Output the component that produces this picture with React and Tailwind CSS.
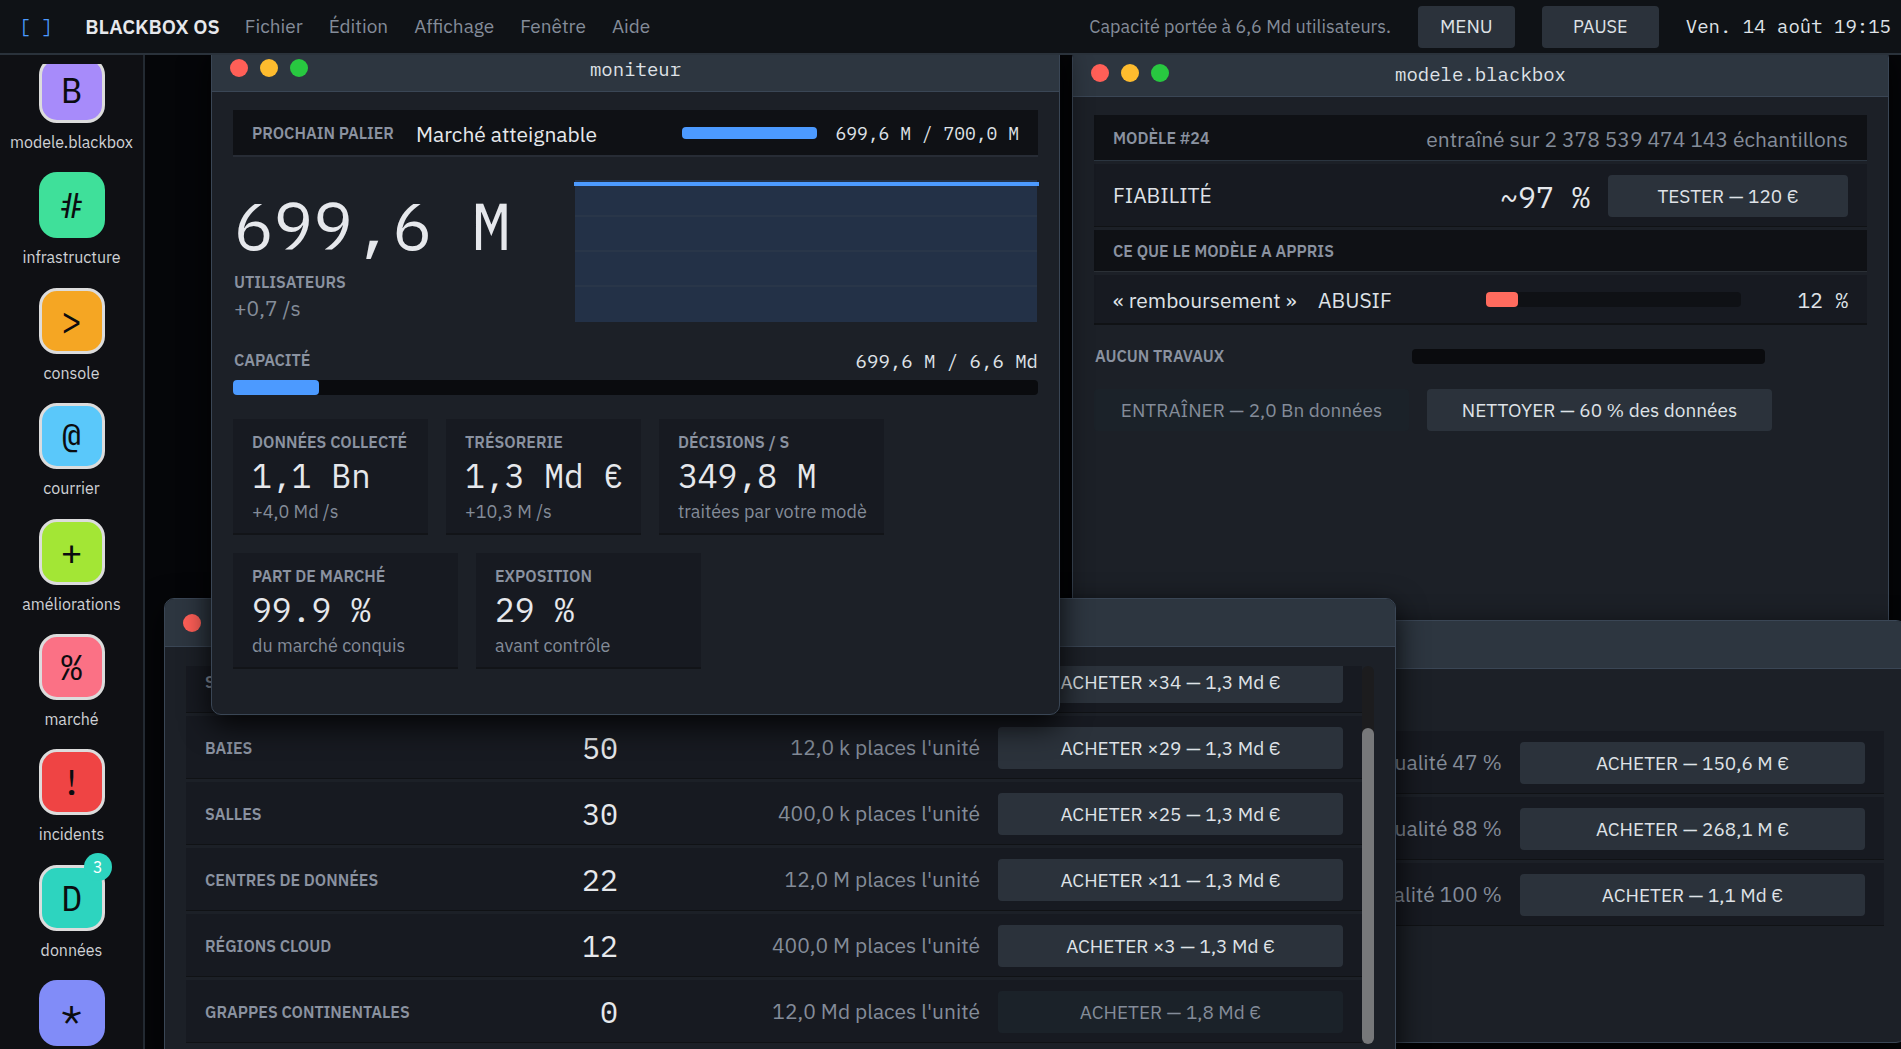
const apps = [
  { glyph: "B", name: "modele.blackbox", color: "bg-[#a78bfa]", open: true },
  { glyph: "#", name: "infrastructure", color: "bg-[#3fe09a]" },
  { glyph: ">", name: "console", color: "bg-[#f5a623]", open: true },
  { glyph: "@", name: "courrier", color: "bg-[#5ac8fa]", open: true },
  { glyph: "+", name: "améliorations", color: "bg-[#a3e635]", open: true },
  { glyph: "%", name: "marché", color: "bg-[#fb7185]", open: true },
  { glyph: "!", name: "incidents", color: "bg-[#ef4444]", open: true },
  { glyph: "D", name: "données", color: "bg-[#2dd4bf]", open: true, badge: 3 },
  { glyph: "*", name: "succès", color: "bg-[#818cf8]" },
];

const tiles = [
  { label: "DONNÉES COLLECTÉ", value: "1,1 Bn", note: "+4,0 Md /s", width: "w-[195px]" },
  { label: "TRÉSORERIE", value: "1,3 Md €", note: "+10,3 M /s", width: "w-[195px]" },
  { label: "DÉCISIONS / S", value: "349,8 M", note: "traitées par votre modè", width: "w-[225px]" },
  { label: "PART DE MARCHÉ", value: "99.9 %", note: "du marché conquis", width: "w-[225px]" },
  { label: "EXPOSITION", value: "29 %", note: "avant contrôle", width: "w-[225px]" },
];

const servers = [
  { name: "SERVEURS", count: 74, note: "400 places l'unité", price: "ACHETER ×34 — 1,3 Md €" },
  { name: "BAIES", count: 50, note: "12,0 k places l'unité", price: "ACHETER ×29 — 1,3 Md €" },
  { name: "SALLES", count: 30, note: "400,0 k places l'unité", price: "ACHETER ×25 — 1,3 Md €" },
  { name: "CENTRES DE DONNÉES", count: 22, note: "12,0 M places l'unité", price: "ACHETER ×11 — 1,3 Md €" },
  { name: "RÉGIONS CLOUD", count: 12, note: "400,0 M places l'unité", price: "ACHETER ×3 — 1,3 Md €" },
  { name: "GRAPPES CONTINENTALES", count: 0, note: "12,0 Md places l'unité", price: "ACHETER — 1,8 Md €", disabled: true },
];

const datasets = [
  { note: "qualité 47 %", price: "ACHETER — 150,6 M €" },
  { note: "qualité 88 %", price: "ACHETER — 268,1 M €" },
  { note: "qualité 100 %", price: "ACHETER — 1,1 Md €" },
];

const mono = "font-['IBM_Plex_Mono','Liberation_Mono',monospace]";
const label = "text-[16px] leading-6 font-semibold text-[#8a92a0]";
const body = "pt-[2px] text-[21px] leading-7";
const rowBox = "flex h-[63px] items-center border-b border-[#101215] bg-[#171a21] px-[19px] pt-[2px]";

function Button({ className = "text-[19px]", width, children, ...rest }) {
  return (
    <button
      type="button"
      className={`h-[42px] shrink-0 rounded-[4px] bg-[#2b323b] text-[#dfe2e7] disabled:bg-[#1b2229] disabled:text-[#848c99] ${width} ${className}`}
      {...rest}
    >
      {children}
    </button>
  );
}

function Window({ title, place, children }) {
  return (
    <section className={`absolute flex flex-col overflow-hidden rounded-[10px] border border-[#3a4655] bg-[#1c2027] shadow-[0_10px_30px_rgba(0,0,0,0.85)] ${place}`}>
      <header className="grid h-12 shrink-0 grid-cols-3 items-center border-b border-[#3a4655] bg-[#2d3640] px-[18px]">
        <div className="flex gap-3">
          <span className="size-[18px] rounded-full bg-[#ff5f57]" />
          <span className="size-[18px] rounded-full bg-[#febc2e]" />
          <span className="size-[18px] rounded-full bg-[#28c840]" />
        </div>
        <h2 className={`pt-[2px] text-center text-[19px] leading-6 text-[#dfe2e7] ${mono}`}>{title}</h2>
      </header>
      <div className="px-[21px] pt-[18px]">{children}</div>
    </section>
  );
}

function MenuBar() {
  return (
    <header className="z-10 flex h-[55px] shrink-0 items-center border-b-2 border-[#2a323b] bg-[#0f1216] pr-[10px] pl-[19px] text-[19px] whitespace-nowrap text-[#848c99]">
      <span className={`text-[#4c9aff] ${mono}`}>[ ]</span>
      <h1 className="ml-8 text-[20px] font-semibold text-[#e6e8ec]">BLACKBOX OS</h1>
      <nav className="ml-[25px] flex gap-[26px]">
        <a href="#fichier">Fichier</a>
        <a href="#edition">Édition</a>
        <a href="#affichage">Affichage</a>
        <a href="#fenetre">Fenêtre</a>
        <a href="#aide">Aide</a>
      </nav>
      <p className="ml-auto text-[18px]">Capacité portée à 6,6 Md utilisateurs.</p>
      <div className="mx-[27px] flex gap-[27px]">
        <Button width="w-[97px]">MENU</Button>
        <Button width="w-[117px]" className="text-[18px]">PAUSE</Button>
      </div>
      <time className={`text-[#dfe2e7] ${mono}`}>Ven. 14 août 19:15</time>
    </header>
  );
}

function Dock() {
  return (
    <aside className="w-[145px] shrink-0 border-r-2 border-[#232a32] bg-[#0f1014] pt-[9px]">
      <div className="h-full overflow-hidden">
        <ul className="-mt-[7px]">
          {apps.map((app) => (
            <li key={app.name} className="flex h-[11vh] flex-col items-center">
              <button
                type="button"
                aria-label={app.name}
                className={`relative size-[66px] shrink-0 rounded-[18px] text-[36px] leading-none text-[#0b0c0f] ${mono} ${app.color} ${app.open ? "border-[3px] border-[#dcdcdc]" : ""}`}
              >
                {app.glyph}
                {app.badge && (
                  <span className="absolute -top-[15px] -right-[10px] flex size-7 items-center justify-center rounded-full bg-[#2dd4bf] text-[16px] text-white">
                    {app.badge}
                  </span>
                )}
              </button>
              <span className="mt-[7px] text-[16px] leading-6 text-[#cfd2d6]">{app.name}</span>
            </li>
          ))}
        </ul>
      </div>
    </aside>
  );
}

function Monitor() {
  return (
    <Window title="moniteur" place="left-[66px] -top-3 z-[4] h-[672px] w-[849px]">
      <div className="flex h-[47px] items-center border-b-2 border-[#272c35] bg-[#0f1115] px-[19px]">
        <span className={label}>PROCHAIN PALIER</span>
        <span className={`ml-[22px] text-[#e6e8ec] ${body}`}>Marché atteignable</span>
        <div className="ml-auto h-3 w-[135px] rounded-[4px] bg-[#4c9aff]" />
        <span className={`ml-[18px] pt-[2px] text-[18px] text-[#dfe2e7] ${mono}`}>699,6 M / 700,0 M</span>
      </div>

      <div className="mt-[23px] flex h-[142px] justify-between pl-px">
        <div className="pt-[6px]">
          <p className={`text-[66px] leading-[78px] text-[#e6e8ec] ${mono}`}>699,6 M</p>
          <p className={`mt-[6px] ${label}`}>UTILISATEURS</p>
          <p className="text-[21px] leading-7 text-[#848c99]">+0,7 /s</p>
        </div>
        <svg className="h-[142px] w-[463px] overflow-visible" viewBox="0 0 463 142">
          <rect width="462" height="142" fill="#233147" />
          <path d="M0 36H462M0 71H462M0 106H462" stroke="#2c394b" strokeWidth="1.5" />
          <path d="M-1 4H464" stroke="#4c9aff" strokeWidth="4" />
        </svg>
      </div>

      <div className="mt-[26px] flex h-6 items-center justify-between pl-px">
        <span className={label}>CAPACITÉ</span>
        <span className={`pt-[2px] text-[19px] leading-6 text-[#dfe2e7] ${mono}`}>699,6 M / 6,6 Md</span>
      </div>
      <div className="mt-2 h-[15px] rounded-[4px] bg-[#0a0b0e]">
        <div className="h-full w-[86px] rounded-[4px] bg-[#4c9aff]" />
      </div>

      <ul className="mt-6 flex flex-wrap gap-[18px]">
        {tiles.map((tile) => (
          <li key={tile.label} className={`h-[116px] border-b-2 border-[#121418] bg-[#171a21] pt-[11px] pl-[19px] whitespace-nowrap ${tile.width}`}>
            <p className={label}>{tile.label}</p>
            <p className={`mt-[2px] text-[33px] leading-10 text-[#e6e8ec] ${mono}`}>{tile.value}</p>
            <p className="mt-1 text-[18px] leading-6 text-[#848c99]">{tile.note}</p>
          </li>
        ))}
      </ul>
    </Window>
  );
}

function Model() {
  return (
    <Window title="modele.blackbox" place="left-[927px] -top-[7px] z-[1] h-[620px] w-[817px]">
      <div className="flex flex-col gap-[3px] whitespace-nowrap">
        <div className="flex h-[46px] items-center justify-between border-b border-[#2b3540] bg-[#0f1115] px-[19px]">
          <span className={label}>MODÈLE #24</span>
          <span className={`text-[#848c99] ${body}`}>entraîné sur 2 378 539 474 143 échantillons</span>
        </div>
        <div className={rowBox}>
          <span className="text-[21px] text-[#dfe2e7]">FIABILITÉ</span>
          <span className={`ml-auto text-[30px] text-[#e6e8ec] ${mono}`}>~97 %</span>
          <Button className="ml-[18px] text-[19px]" width="w-60">TESTER — 120 €</Button>
        </div>
        <div className="flex h-[42px] items-center border-b border-[#2b3036] bg-[#0f1115] px-[19px]">
          <span className={label}>CE QUE LE MODÈLE A APPRIS</span>
        </div>
        <div className="flex h-[50px] items-center border-b-2 border-[#101215] bg-[#171a21] px-[19px] text-[#dfe2e7]">
          <span className={`w-[205px] ${body}`}>« remboursement »</span>
          <span className={`w-[168px] ${body}`}>ABUSIF</span>
          <div className="h-[15px] w-[255px] rounded-[4px] bg-[#0f1115]">
            <div className="h-full w-8 rounded-[4px] bg-[#ff6b5e]" />
          </div>
          <span className={`ml-auto ${body} ${mono}`}>12 %</span>
        </div>
      </div>
      <div className="mt-[19px] flex h-6 items-center pl-px">
        <span className={`w-[317px] ${label}`}>AUCUN TRAVAUX</span>
        <div className="h-[15px] w-[353px] rounded-[4px] bg-[#0a0b0e]" />
      </div>
      <div className="mt-[21px] flex gap-[18px]">
        <Button width="w-[315px]" disabled>ENTRAÎNER — 2,0 Bn données</Button>
        <Button width="w-[345px]">NETTOYER — 60 % des données</Button>
      </div>
    </Window>
  );
}

function Infrastructure() {
  return (
    <Window title="infrastructure" place="left-[19px] top-[543px] z-[3] h-[468px] w-[1232px]">
      <div className="mt-px flex h-[378px] overflow-hidden">
        <ul className="-mt-4 flex flex-1 flex-col gap-[3px] whitespace-nowrap">
          {servers.map((s) => (
            <li key={s.name} className={`shrink-0 ${rowBox}`}>
              <span className={`w-[230px] ${label}`}>{s.name}</span>
              <span className={`w-[183px] text-right text-[30px] leading-10 text-[#e6e8ec] ${mono}`}>{s.count}</span>
              <span className="flex-1 text-right text-[21px] text-[#848c99]">{s.note}</span>
              <Button className="ml-[18px] text-[19px]" width="w-[345px]" disabled={s.disabled}>{s.price}</Button>
            </li>
          ))}
        </ul>
        <div className="w-3 rounded-full bg-[#1c1c1e] pt-[62px]">
          <div className="h-full rounded-full bg-[#77787a]" />
        </div>
      </div>
    </Window>
  );
}

function Datasets() {
  return (
    <Window title="données" place="left-[528px] top-[565px] z-[2] h-[423px] w-[1233px]">
      <ul className="mt-11 flex flex-col gap-[3px] whitespace-nowrap">
        {datasets.map((d) => (
          <li key={d.note} className={rowBox}>
            <span className="flex-1 text-right text-[21px] text-[#848c99]">{d.note}</span>
            <Button className="ml-[18px] text-[19px]" width="w-[345px]">{d.price}</Button>
          </li>
        ))}
      </ul>
    </Window>
  );
}

export default function App() {
  return (
    <div className="flex h-screen flex-col overflow-hidden bg-black font-['IBM_Plex_Sans','Noto_Sans',sans-serif]">
      <MenuBar />
      <div className="flex min-h-0 flex-1">
        <Dock />
        <main className="relative flex-1 overflow-hidden bg-[#050609]">
          <Model />
          <Datasets />
          <Infrastructure />
          <Monitor />
        </main>
      </div>
    </div>
  );
}
